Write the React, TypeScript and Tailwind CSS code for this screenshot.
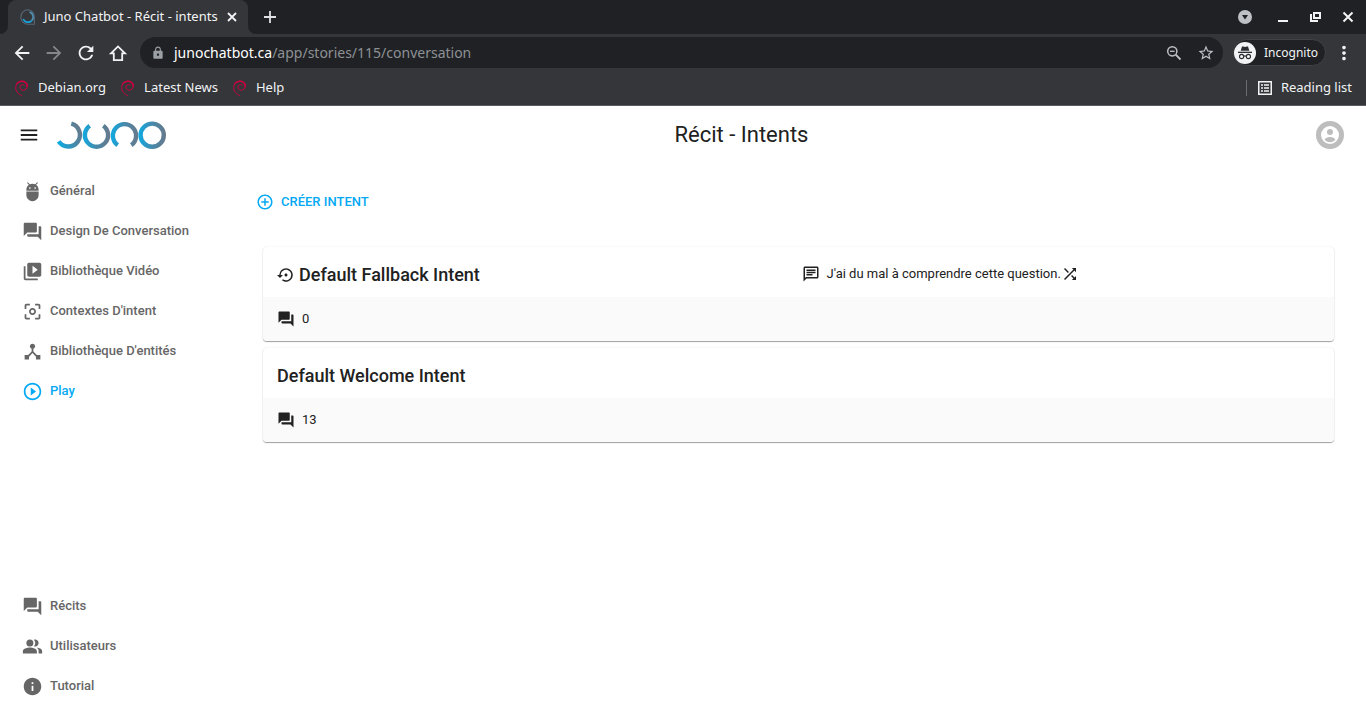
import type { ReactNode } from 'react';
import type { IconType } from 'react-icons';
import {
  MdAdb,
  MdArrowBack,
  MdArrowForward,
  MdCenterFocusWeak,
  MdControlPoint,
  MdDeviceHub,
  MdInfo,
  MdLock,
  MdMenu,
  MdMoreVert,
  MdOutlineChat,
  MdPeopleAlt,
  MdPlayCircleOutline,
  MdQuestionAnswer,
  MdRefresh,
  MdSettingsBackupRestore,
  MdShuffle,
  MdStarBorder,
  MdVideoLibrary,
} from 'react-icons/md';

function DebianSwirl() {
  return (
    <svg
      viewBox="0 0 16 16"
      className="size-4 shrink-0 fill-none stroke-[#d00041]"
      strokeLinecap="round"
      aria-hidden="true"
    >
      <path
        d="M7.500 15.400C4 14 1.600 11 1.700 7.500 1.800 3.800 4.600 1.300 8 1.300c3.200 0 5.500 2.200 5.200 5-.2 2.300-1.800 3.900-3.900 3.900-2 0-3.300-1.300-3.300-3 0-1.500 1.200-2.600 2.600-2.600.8 0 1.400.3 1.700.8"
        strokeWidth="1"
      />
      <path d="M3.300 3.300C5.600.900 9.200.700 11.400 2.400c1.400 1.100 2 2.600 1.800 4" strokeWidth="1.600" />
    </svg>
  );
}

function Favicon() {
  return (
    <svg viewBox="0 0 16 16" className="size-4 shrink-0 fill-none" aria-hidden="true">
      <path d="M8 .8a7.200 7.200 0 1 0 0 14.400h6.400V8A7.200 7.200 0 0 0 8 .8Z" stroke="#566775" strokeWidth="1.100" />
      <path d="M9.500 3a5.200 5.200 0 0 1 2.200 8.600" stroke="#4f91b4" strokeWidth="1.700" />
      <path d="M11.700 11.600A5.200 5.200 0 0 1 3.200 10" stroke="#18a4dc" strokeWidth="1.700" />
    </svg>
  );
}

function JunoLogo() {
  return (
    <svg viewBox="0 0 110 28" className="h-7 w-[110px] fill-none" role="img" aria-label="Juno">
      <defs>
        <linearGradient id="ring1" gradientUnits="userSpaceOnUse" x1="1" y1="20" x2="25" y2="10">
          <stop offset="0" stopColor="#0fa9e0" />
          <stop offset=".55" stopColor="#4689aa" />
          <stop offset="1" stopColor="#68788a" />
        </linearGradient>
        <linearGradient id="ring2" gradientUnits="userSpaceOnUse" x1="26" y1="14" x2="53" y2="14">
          <stop offset="0" stopColor="#0fa9e0" />
          <stop offset=".5" stopColor="#4689aa" />
          <stop offset="1" stopColor="#68788a" />
        </linearGradient>
        <linearGradient id="ring3" gradientUnits="userSpaceOnUse" x1="54" y1="14" x2="81" y2="14">
          <stop offset="0" stopColor="#0fa9e0" />
          <stop offset=".5" stopColor="#4689aa" />
          <stop offset="1" stopColor="#68788a" />
        </linearGradient>
        <linearGradient id="ring4" gradientUnits="userSpaceOnUse" x1="82" y1="14" x2="109" y2="14">
          <stop offset="0" stopColor="#0fa9e0" />
          <stop offset=".5" stopColor="#4689aa" />
          <stop offset="1" stopColor="#68788a" />
        </linearGradient>
      </defs>
      <g strokeWidth="4.400">
        <path d="M14.300 2.700A11.600 11.600 0 1 1 1.700 20.400" stroke="url(#ring1)" />
        <path d="M32.700 4.700A11.600 11.600 0 1 0 46.300 4.700" stroke="url(#ring2)" />
        <path d="M60.700 24.100A11.600 11.600 0 1 1 74.300 24.100" stroke="url(#ring3)" />
        <circle cx="95.200" cy="14.200" r="11.600" stroke="url(#ring4)" />
      </g>
    </svg>
  );
}

function IncognitoIcon() {
  return (
    <svg viewBox="0 0 22 22" className="size-[22px] shrink-0" aria-hidden="true">
      <circle cx="11" cy="11" r="11" fill="#f1f3f4" />
      <path d="M8 4.500h1.200l1.800.5 1.800-.5H14l1.300 4.300H6.700Z" fill="#2b2c30" />
      <path d="M4 9.700h14v1.300H4Z" fill="#2b2c30" />
      <g fill="none" stroke="#2b2c30" strokeWidth="1.100">
        <circle cx="7.600" cy="14.500" r="2.100" />
        <circle cx="14.400" cy="14.500" r="2.100" />
        <path d="M9.700 14.300c.8-.5 1.800-.5 2.600 0" />
      </g>
    </svg>
  );
}

function ChromeButton({ label, children }: { label: string; children: ReactNode }) {
  return (
    <button type="button" aria-label={label} className="flex size-8 items-center justify-center">
      {children}
    </button>
  );
}

function TabStrip() {
  return (
    <div className="flex h-[34px] items-stretch justify-between bg-[#202124]">
      <div className="flex items-stretch">
        <div className="flex w-2 bg-[#35363a]">
          <span className="flex-1 rounded-br-lg bg-[#202124]" />
        </div>
        <div className="flex w-60 items-center rounded-t-lg bg-[#35363a] pr-2 pl-3 text-[13px] text-[#f1f3f4]">
          <Favicon />
          <span className="flex-1 pl-2 whitespace-nowrap">Juno Chatbot - Récit - intents</span>
          <button type="button" aria-label="Close tab" className="flex size-4 shrink-0 items-center justify-center">
            <svg viewBox="0 0 16 16" className="size-4 stroke-[#f1f3f4]" strokeWidth="1.800">
              <path d="m4 4 8 8m0-8-8 8" />
            </svg>
          </button>
        </div>
        <div className="flex w-2 bg-[#35363a]">
          <span className="flex-1 rounded-bl-lg bg-[#202124]" />
        </div>
        <button type="button" aria-label="New tab" className="flex w-7 items-center justify-center">
          <svg viewBox="0 0 14 14" className="size-3.5 stroke-[#dfe1e5]" strokeWidth="1.800">
            <path d="M7 1v12M1 7h12" />
          </svg>
        </button>
      </div>
      <div className="flex items-center pr-0.5">
        <button type="button" aria-label="Search tabs" className="mr-4 flex">
          <svg viewBox="0 0 14 14" className="size-3.5">
            <circle cx="7" cy="7" r="7" fill="#bdc1c6" />
            <path d="M4 5h6L7 9.500Z" fill="#202124" />
          </svg>
        </button>
        <ChromeButton label="Minimize">
          <svg viewBox="0 0 12 12" className="size-3 fill-[#f1f3f4]">
            <path d="M0 9h10v2H0Z" />
          </svg>
        </ChromeButton>
        <ChromeButton label="Restore">
          <svg viewBox="0 0 12 12" className="size-3 fill-none stroke-[#f1f3f4]" strokeWidth="2">
            <path d="M4 2h6v5H4Z" />
            <path d="M1 3v7h7" />
          </svg>
        </ChromeButton>
        <ChromeButton label="Close">
          <svg viewBox="0 0 12 12" className="size-3 stroke-[#f1f3f4]" strokeWidth="2">
            <path d="m1.500 1.500 9 9m0-9-9 9" />
          </svg>
        </ChromeButton>
      </div>
    </div>
  );
}

function Toolbar() {
  return (
    <div className="flex h-[37px] items-center bg-[#35363a] pl-1.5 text-[#f1f3f4]">
      <ChromeButton label="Back">
        <MdArrowBack className="size-[22px]" />
      </ChromeButton>
      <ChromeButton label="Forward">
        <MdArrowForward className="size-[22px] text-[#85868a]" />
      </ChromeButton>
      <ChromeButton label="Reload">
        <MdRefresh className="size-[22px]" />
      </ChromeButton>
      <ChromeButton label="Home">
        <svg viewBox="0 0 20 20" className="size-5 fill-none stroke-current" strokeWidth="1.800" aria-hidden="true">
          <path d="M3 10.300h2.800v6.800h8.400v-6.800H17L10 3.400Z" />
        </svg>
      </ChromeButton>
      <div className="ml-1.5 flex h-[31px] flex-1 items-center gap-2 rounded-full bg-[#202124] pr-2 pl-2.5 text-[#9aa0a6]">
        <span className="flex w-4 justify-center">
          <MdLock className="size-3.5" />
        </span>
        <div className="flex-1 text-sm text-[#8d9195]">
          <span className="text-white">junochatbot.ca</span>/app/stories/115/conversation
        </div>
        <button type="button" aria-label="Zoom" className="mr-1.5 flex">
          <svg viewBox="0 0 18 18" className="size-[18px] fill-none stroke-[#bdc1c6]" aria-hidden="true">
            <circle cx="7.300" cy="7.300" r="4.600" strokeWidth="1.500" />
            <path d="m10.700 10.700 4.800 4.800" strokeWidth="1.800" />
            <path d="M5 7.300h4.600" strokeWidth="1.300" />
          </svg>
        </button>
        <button type="button" aria-label="Bookmark this page" className="flex text-[#bdc1c6]">
          <MdStarBorder className="size-[18px]" />
        </button>
      </div>
      <button
        type="button"
        className="ml-2.5 flex h-[27px] items-center gap-2 rounded-full border border-[#414246] bg-[#202124] pr-[7px] text-xs whitespace-nowrap"
      >
        <IncognitoIcon />
        Incognito
      </button>
      <button type="button" aria-label="Menu" className="mr-3 ml-2 flex w-5 justify-center">
        <MdMoreVert className="size-[22px] shrink-0" />
      </button>
    </div>
  );
}

function Bookmarks() {
  return (
    <nav
      aria-label="Bookmarks"
      className="flex h-[35px] items-center justify-between border-b border-[#5b5c60] bg-[#35363a] pr-3.5 pl-3.5 text-[13px] text-[#f1f3f4]"
    >
      <div className="flex items-center gap-3.5">
        {['Debian.org', 'Latest News', 'Help'].map((name) => (
          <a key={name} href="#" className="flex items-center gap-2">
            <DebianSwirl />
            {name}
          </a>
        ))}
      </div>
      <button type="button" className="flex items-center gap-2">
        <span className="mr-0.5 h-4 w-px bg-[#6a6b6f]" />
        <svg viewBox="0 0 16 16" className="size-4 fill-none stroke-[#f1f3f4]" aria-hidden="true">
          <path d="M1.750 1.750h12.500v12.500H1.750Z" strokeWidth="1.500" />
          <path d="M4 5h2m1 0h5M4 8h2m1 0h5M4 11h2m1 0h5" strokeWidth="1.600" />
        </svg>
        Reading list
      </button>
    </nav>
  );
}

type NavItem = { label: string; icon: IconType; active?: boolean };

const storyLinks: NavItem[] = [
  { label: 'Général', icon: MdAdb },
  { label: 'Design De Conversation', icon: MdQuestionAnswer },
  { label: 'Bibliothèque Vidéo', icon: MdVideoLibrary },
  { label: "Contextes D'intent", icon: MdCenterFocusWeak },
  { label: "Bibliothèque D'entités", icon: MdDeviceHub },
  { label: 'Play', icon: MdPlayCircleOutline, active: true },
];

const globalLinks: NavItem[] = [
  { label: 'Récits', icon: MdQuestionAnswer },
  { label: 'Utilisateurs', icon: MdPeopleAlt },
  { label: 'Tutorial', icon: MdInfo },
];

function NavList({ items }: { items: NavItem[] }) {
  return (
    <ul>
      {items.map(({ label, icon: Icon, active }) => (
        <li key={label}>
          <a
            href="#"
            className={`flex h-10 items-center gap-[7px] pl-[22px] text-[13px] font-medium ${
              active ? 'text-[#03a9f4]' : 'text-[#666666]'
            }`}
          >
            <Icon className="size-[21px]" />
            {label}
          </a>
        </li>
      ))}
    </ul>
  );
}

type Intent = { name: string; count: number; fallback?: boolean; response?: string };

const intents: Intent[] = [
  {
    name: 'Default Fallback Intent',
    count: 0,
    fallback: true,
    response: "J'ai du mal à comprendre cette question.",
  },
  { name: 'Default Welcome Intent', count: 13 },
];

function IntentCard({ intent }: { intent: Intent }) {
  return (
    <article className="overflow-hidden rounded bg-white shadow-[0_1px_1px_rgba(0,0,0,0.36),0_0_2px_rgba(0,0,0,0.1)]">
      <div className="grid grid-cols-2 items-center px-3.5 pt-3.5 pb-2">
        <h2 className="flex items-center gap-1 text-lg font-medium">
          {intent.fallback && <MdSettingsBackupRestore className="size-[18px]" />}
          {intent.name}
        </h2>
        {intent.response && (
          <p className="flex items-center pb-0.5 pl-[3px] text-[13px]">
            <MdOutlineChat className="mr-[7px] size-[18px]" />
            {intent.response}
            <MdShuffle className="size-[18px]" />
          </p>
        )}
      </div>
      <div className="flex h-11 items-center gap-[7px] bg-[#fafafa] px-3.5 text-[13px]">
        <MdQuestionAnswer className="size-[18px]" />
        {intent.count}
      </div>
    </article>
  );
}

export default function App() {
  return (
    <div className="flex min-h-screen flex-col bg-white">
      <div className="font-['Noto_Sans',sans-serif]">
        <TabStrip />
        <Toolbar />
        <Bookmarks />
      </div>
      <div className="flex flex-1 flex-col font-[Roboto,sans-serif] text-[#212121]">
        <header className="flex h-[58px] items-center pr-[22px] pl-[18px]">
          <div className="flex items-center gap-[17px]">
            <button type="button" aria-label="Menu">
              <MdMenu className="size-[22px]" />
            </button>
            <JunoLogo />
          </div>
          <h1 className="flex-1 text-center text-[22px] leading-7">Récit - Intents</h1>
          <button type="button" aria-label="Account">
            <svg viewBox="0 0 28 28" className="size-7 fill-[#bdbdbd]">
              <circle cx="14" cy="14" r="11.500" fill="none" stroke="#bdbdbd" strokeWidth="5" />
              <circle cx="14" cy="11" r="3" />
              <path d="M8.700 18.800c0-1.700 3-2.800 5.300-2.800s5.300 1.100 5.300 2.800c-1 1.600-3 2.500-5.300 2.500s-4.300-.9-5.300-2.500Z" />
            </svg>
          </button>
        </header>
        <div className="flex flex-1">
          <nav aria-label="Navigation" className="flex w-[250px] shrink-0 flex-col justify-between pt-[7px] pb-[15px]">
            <NavList items={storyLinks} />
            <NavList items={globalLinks} />
          </nav>
          <main className="flex-1 pt-7 pr-8 pl-1.5">
            <button
              type="button"
              className="flex items-center gap-[7px] text-[13px] leading-5 font-medium text-[#03a9f4]"
            >
              <MdControlPoint className="size-[18px]" />
              CRÉER INTENT
            </button>
            <div className="mt-[35px] flex flex-col gap-[7px] pl-[7px]">
              {intents.map((intent) => (
                <IntentCard key={intent.name} intent={intent} />
              ))}
            </div>
          </main>
        </div>
      </div>
    </div>
  );
}
